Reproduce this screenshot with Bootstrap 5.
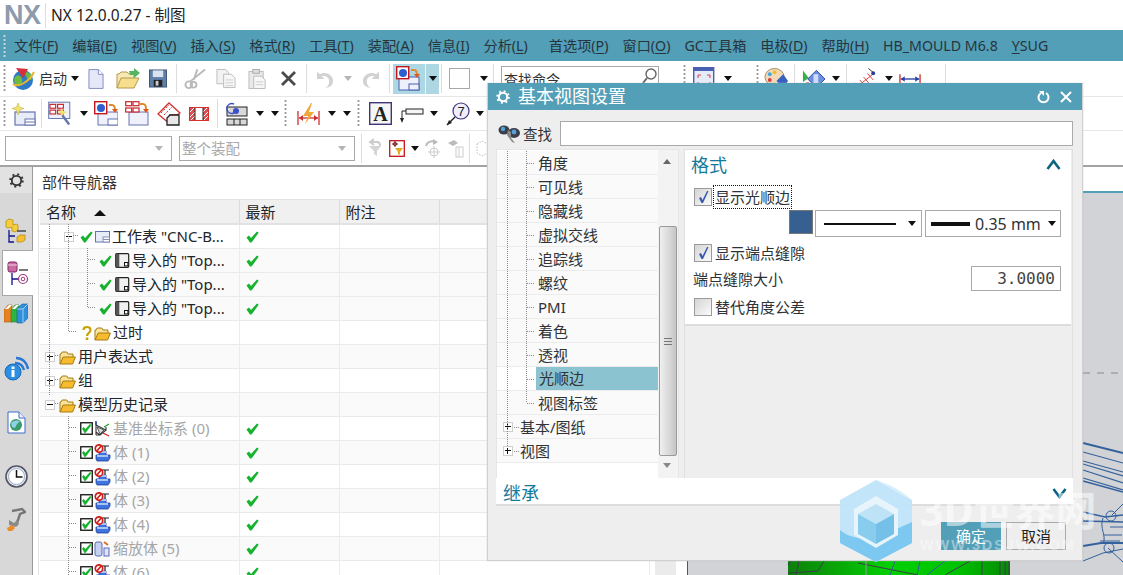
<!DOCTYPE html>
<html lang="zh">
<head>
<meta charset="utf-8">
<title>NX 12.0.0.27 - 制图</title>
<link href="https://cdn.jsdelivr.net/npm/bootstrap@5.3.0/dist/css/bootstrap.min.css" rel="stylesheet">
<style>
html,body{margin:0;height:575px;overflow:hidden;background:#fff}
body{font-family:"Noto Sans","Noto Sans CJK SC",sans-serif;font-size:15px;line-height:20px;color:#2f3336}
.app{width:1123px;height:575px;position:relative;overflow:hidden}
svg{display:block;flex:none}
.titlebar{height:30px;background:#fff}
.nxlogo{font:bold 27px/30px "Liberation Sans",sans-serif;color:#8d9cac;width:46px;padding-left:4px;height:25px;border-right:1px solid #ddd;display:flex;align-items:center;letter-spacing:-.5px}
.apptitle{font-size:15.5px;margin-left:5px;color:#222}
.menubar{height:31px;background:#549fb8;color:#26343c;padding-left:14px;gap:14px;position:relative;font-size:14.2px}
.menubar span{white-space:nowrap}
.menubar u{text-underline-offset:2px}
.menu-gap{margin-left:7px}
.grip{width:3px;background-image:radial-gradient(circle,#999 1px,transparent 1.2px);background-size:3px 4px;flex:none}
.menugrip{position:absolute;left:3px;top:4px;height:24px;background-image:radial-gradient(circle,#d0d8dc 1px,transparent 1.2px)}
.tbar{background:#fff;border-bottom:1px solid #e6e6e6;padding-left:3px}
.tb1{height:36px}.tb2{height:34px}.tb3{height:36px;border-bottom:2px solid #a3a3a3;padding-left:5px}
.tgrip{height:29px}
.vsep{width:1px;height:29px;background:#ddd;flex:none}
.tri{width:0;height:0;border-left:4px solid transparent;border-right:4px solid transparent;border-top:5px solid #111;flex:none}
.tri-off{border-top-color:#b5b5b5}
.hl{width:46px;height:30px;background:#acd7e3;display:flex;align-items:center;padding-left:3px;flex:none}
.hl i{width:1px;height:30px;background:#e8f4f7;margin-left:5px;margin-right:3px}
.stxt{font-size:14px}
.whitebox{width:21px;height:21px;border:1px solid #a8a8a8;background:#fff;flex:none}
.findcmd{width:158px;height:26px;border:1px solid #a8a8a8;padding-left:2px;font-size:14px;line-height:26px;display:flex;justify-content:space-between;flex:none}
.combo{height:25px;border:1px solid #a8a8a8;background:#fff;display:flex;align-items:center;justify-content:space-between;padding:0 8px 0 2px;color:#aaa;font-size:14.5px;flex:none}
.c1{width:167px}.c2{width:176px}
.ml1{margin-left:1px}.ml2{margin-left:2px}.ml3{margin-left:3px}.ml4{margin-left:4px}.ml5{margin-left:5px}.ml6{margin-left:6px}.ml7{margin-left:7px}.ml8{margin-left:8px}.ml9{margin-left:9px}.ml10{margin-left:10px}.ml11{margin-left:11px}.ml12{margin-left:12px}.ml13{margin-left:13px}.ml24{margin-left:24px}
.bodyrow{height:408px}
.rail{width:33px;background:#d8d8d8;border-right:1px solid #9a9a9a;flex:none;align-items:center}
.railtop{height:26px;width:100%;background:#e2e2e2;display:flex;align-items:center;justify-content:center}
.railtab{width:31px;height:46px;margin-left:2px;background:#fff;border:1px solid #a8a8a8;border-right:0;display:flex;align-items:center;padding-left:4px}
.r1{margin-top:25px}.r2{margin-top:6px}.r3{margin-top:7px}.r4{margin-top:31px}.r5{margin-top:30px}.r6{margin-top:31px}.r7{margin-top:19px}
.navpanel{width:622px;background:#fff;flex:none;position:relative}
.navtitle{height:32px;padding:1px 0 0 9px;line-height:28px;font-size:15px}
.navwrap{margin-left:5px;border:1px solid #e2e2e2;border-bottom:0;position:relative;height:376px;overflow:hidden;border-right:0;padding-left:1px}
.navtbl{width:610px;table-layout:fixed;margin:0;border-collapse:collapse}
.navtbl th{height:24px;background:#f0f0f0;font-weight:400;border-right:1px solid #dcdcdc;border-bottom:2px solid #e2e2e2;padding:0 0 0 6px;line-height:22px;font-size:15px}
.navtbl td{height:24px;padding:0;border-right:1px solid #ececec;border-bottom:1px solid #eaeaea;line-height:23px;background:#fff;white-space:nowrap;box-shadow:none;vertical-align:middle}
.navtbl tr.zeb td{background:#fafafa}
.navtbl td.ckc{padding-left:6px}
.navtbl .off{color:#a6a6a6}
.colname{width:199px}.colnew{width:100px}.colnote{width:100px}
.sortup{border-left:6px solid transparent;border-right:6px solid transparent;border-bottom:6px solid #111;width:0;height:0;display:inline-block;margin-left:18px;vertical-align:2px}
.cell{display:flex;align-items:center;height:23px}
.lv0{padding-left:5px}.lv1{padding-left:24px}.lv3{padding-left:59px}.lv1b{padding-left:40px}
.pbox{width:10px;height:10px;border:1px solid #cfcfcf;background:#fff;position:relative;flex:none;display:block}
.pbox::before{content:"";position:absolute;left:1px;right:1px;top:3px;height:1px;background:#111}
.pbox.plus::after{content:"";position:absolute;top:1px;bottom:1px;left:3px;width:1px;background:#111}
.treelines{position:absolute;left:0;top:0;pointer-events:none}
.splitter{width:21px;background:#ebebeb;flex:none}
.gfxcol{flex:1;min-width:0}
.tabstrip{height:26px;background:#fff;border-bottom:2px solid #549fb8;flex:none}
.gfxbody{flex:1;background:#fff;padding-left:11px;min-height:0}
.gfx{background:#d2d3d6;border-left:1px solid #555;height:100%;position:relative;overflow:hidden}
/* dialog */
.dlg{position:absolute;left:487px;top:83px;width:596px;height:478px;background:#eee;border:1px solid #d0d0d0;border-top:0;box-shadow:0 0 1px #bbb}
.dlghead{height:27px;background:#549fb8;color:#fff;font-size:18px;line-height:27px;padding:0 10px 0 8px;flex:none}
.dlgfind{height:39px;padding:8px 9px 0 10px;flex:none;font-size:14.5px}
.findin{flex:1;height:25px;border:1px solid #aaa;background:#fff;margin-left:8px}
.dlgmid{height:329px;padding:0 9px 0 8px;flex:none;gap:5px}
.treep{width:183px;background:#fff;border:1px solid #e6e6e6;border-bottom:0;position:relative;flex:none;padding-top:1px}
.trow{height:24px;width:162px;background:#fafafa;border-bottom:1px solid #ececec;display:flex;align-items:center;line-height:20px;font-size:15px}
.trow.plain{padding-left:41px}
.trow.sel{background:#fff;padding-left:39px}
.trow.sel b{font-weight:400;background:#8cc3d1;display:block;height:23px;line-height:23px;width:123px;padding-left:3px}
.trow.top{padding-left:6px}
.trow.top .tl{margin-left:7px}
.sbar{position:absolute;right:0;top:0;bottom:0;width:20px;background:#f3f3f3}
.thumb{position:absolute;left:1px;width:18px;top:76px;height:230px;border:1px solid #9a9a9a;border-radius:2px;background:linear-gradient(90deg,#f0f0f0,#c6c6c6)}
.arrup,.arrdn{position:absolute;left:5px;width:0;height:0;border-left:4px solid transparent;border-right:4px solid transparent}
.arrup{top:9px;border-bottom:5px solid #666}
.arrdn{bottom:10px;border-top:5px solid #888}
.gripl{position:absolute;left:4px;right:4px;top:111px;height:7px;border-top:1px solid #777;border-bottom:1px solid #777}
.gripl::after{content:"";position:absolute;left:0;right:0;top:2px;height:1px;background:#777}
.setp{flex:1;border:1px solid #e0e0e0;border-bottom:0;background:#eee}
.setwhite{height:176px;background:#fff;border-bottom:2px solid #ddd;padding:2px 10px 0 6px;margin-right:1px}
.sechead{color:#157a9a;font-size:18px;line-height:24px;height:25px}
.chev{flex:none}
.ckrow{height:24px;font-size:15px;line-height:20px;display:flex;align-items:center}
.ckrow.c-a{margin-top:8px}
.ckrow.c-b{margin-top:4px}
.ckrow.c-c{margin-top:4px}
.ckbox{width:18px;height:18px;border:1px solid #9b9b9b;background:linear-gradient(135deg,#d4d4d4,#fbfbfb);flex:none;margin-left:3px;margin-right:3px;display:flex;align-items:center;justify-content:center}
.plainlbl{padding-left:0}
.focusbox{outline:1px dotted #111;outline-offset:1px;padding:0;line-height:20px}
.lineopts{margin-top:1px;height:27px}
.swatch{width:24px;height:24px;background:#35608f;border:1px solid #777;flex:none}
.lsel{height:27px;border:1px solid #aaa;background:#fff;display:flex;align-items:center;flex:none;white-space:nowrap}
.ls1{width:107px;margin-left:2px;margin-right:3px;padding-left:8px}
.ls2{width:136px;padding-left:5px;font-size:16px}
.lin1{height:2px;width:72px;background:#111}
.lin2{height:4px;width:39px;background:#111;margin-right:5px}
.numrow{margin-top:1px}
.numin{width:90px;height:25px;border:1px solid #aaa;background:#fff;text-align:right;padding-right:5px;font:16px/24px "DejaVu Sans Mono",monospace;color:#444}
.secbar{height:28px;background:#fff;border-bottom:2px solid #ddd;margin:0 9px 0 8px;padding:4px 6px 0 7px;flex:none;color:#157a9a;font-size:18px;line-height:24px}
.dlgbtns{padding:16px 16px 0 0;gap:5px}
.dbtn{height:28px;width:60px;font-size:15px;line-height:26px;padding:0;border-radius:0;text-align:center}
.dbtn-ok{background:#549fb8;color:#fff;border:1px solid #549fb8}
.dbtn-no{background:#eee;color:#222;border:1px solid #aaa}
.rowlabel{padding-left:2px;flex:1}
/* watermark */
.wmark{position:absolute;left:838px;top:478px;width:264px;height:86px;pointer-events:none}
.wmcn{position:absolute;left:82px;top:9px;color:rgba(255,255,255,.55);font:700 41px/46px "Noto Sans","Noto Sans CJK SC",sans-serif;white-space:nowrap}
.wmen{position:absolute;left:82px;top:57px;color:rgba(255,255,255,.42);font:700 14.5px/20px "Liberation Sans",sans-serif;letter-spacing:1.9px;white-space:nowrap}
</style>
</head>
<body>
<svg width="0" height="0" class="position-absolute">
<defs>
<symbol id="ck" viewBox="0 0 13 12"><path d="M.5 6.500 3 4.600l2 2.400L11 .5l1.700 1.200-7.200 9.800H4z" fill="#17b32f"/></symbol>
<symbol id="cb" viewBox="0 0 13 13"><rect x=".75" y=".75" width="11.500" height="11.500" fill="#fff" stroke="#111" stroke-width="1.300"/><path d="M2 6.500 3.800 5l1.600 2L10 2l1.500 1-6 8H4.500z" fill="#17b32f"/></symbol>
<symbol id="fo" viewBox="0 0 17 16"><path d="M1 15V5h1l1.200-2h4.600L9 5h5v4" fill="#f8e39a" stroke="#a67a12"/><path d="M1 15 4.200 8H16.400L13.600 15z" fill="#f6bb2f" stroke="#a67a12"/></symbol>
<symbol id="sh" viewBox="0 0 15 12"><rect x=".5" y=".5" width="14" height="10.500" fill="#e9edf9" stroke="#6474ad"/><rect x="8" y="6" width="6.500" height="5" fill="#fff" stroke="#8590b8"/><path d="M8 8.500h6.500" stroke="#8590b8"/></symbol>
<symbol id="im" viewBox="0 0 15 15"><rect x=".7" y=".7" width="13" height="13.600" rx="1" fill="#f1f1f1" stroke="#222" stroke-width="1.200"/><rect x=".7" y=".7" width="3.600" height="13.600" fill="#555"/><rect x="9.500" y="9.500" width="3.400" height="3.400" fill="#fff" stroke="#111"/></symbol>
<symbol id="bd" viewBox="0 0 17 18"><path d="M8 2h7M11 2v5" fill="none" stroke="#222" stroke-width="1.200"/><path d="M5 7h7v4h4v3l-2 3H3l-1-2v-4h3z" fill="#3f73e0" stroke="#1f3f96" stroke-width=".8"/><path d="M5 7h7v2H5zM3 11h11v2H3z" fill="#a8c4f4"/><circle cx="5" cy="4.500" r="3.700" fill="#fff" stroke="#d21b1b" stroke-width="1.700"/><path d="M2.500 7.500l5-6" stroke="#d21b1b" stroke-width="1.700"/></symbol>
<symbol id="sc" viewBox="0 0 16 16"><path d="M2 1v13M2 4l10 5-6 5-4-3M2 14l4 0M12 9v-3" stroke="#333" fill="none" stroke-width="1.100"/><path d="M2 0v4" stroke="#1c49b8" stroke-width="1.400"/><path d="M10 6l5-3" stroke="#2aa02a" stroke-width="1.300"/><path d="M9 12l6 3" stroke="#d22" stroke-width="1.300"/><path d="M3 6l7 3-4 4z" fill="#d8d8d8" stroke="#333" stroke-width=".8"/></symbol>
<symbol id="gsheet" viewBox="0 0 24 24"><rect x="3" y="10" width="20" height="13" fill="#e8ebf8" stroke="#6474ad" stroke-width="1.200"/><rect x="13" y="17" width="10" height="6" fill="#fff" stroke="#6474ad"/><path d="M13 20h10" stroke="#6474ad"/></symbol>
</defs>
</svg>

<div class="app d-flex flex-column">
  <header class="titlebar d-flex align-items-center">
    <div class="nxlogo">NX</div>
    <div class="apptitle">NX 12.0.0.27 - 制图</div>
  </header>

  <nav class="menubar d-flex align-items-center">
    <div class="grip menugrip"></div>
    <span>文件(<u>F</u>)</span><span>编辑(<u>E</u>)</span><span>视图(<u>V</u>)</span><span>插入(<u>S</u>)</span><span>格式(<u>R</u>)</span><span>工具(<u>T</u>)</span><span>装配(<u>A</u>)</span><span>信息(<u>I</u>)</span><span>分析(<u>L</u>)</span><span class="menu-gap">首选项(<u>P</u>)</span><span>窗口(<u>O</u>)</span><span>GC工具箱</span><span>电极(<u>D</u>)</span><span>帮助(<u>H</u>)</span><span>HB_MOULD M6.8</span><span><u>Y</u>SUG</span>
  </nav>

  <div class="tbar tb1 d-flex align-items-center">
    <div class="grip tgrip"></div>
    <svg class="ml6" width="23" height="24" viewBox="0 0 23 24"><circle cx="11" cy="13" r="10" fill="#2f79c9"/><path d="M3 10c3-3 6-1 7 2s-1 8-4 7-5-6-3-9zM14 5c3 0 6 3 6 6s-3 2-4 1-4-5-2-7z" fill="#6dbb3d"/><path d="M1 17C6 21 17 15 22 5" stroke="#e7b52c" stroke-width="2" fill="none"/><path d="M4 1 16 2 11 11z" fill="#d8303a"/></svg>
    <span class="stxt ml4">启动</span><span class="tri ml4"></span>
    <svg class="ml9" width="16" height="22" viewBox="0 0 17 22"><path d="M1 1h10l5 5v15H1z" fill="#e6e8fa" stroke="#7f86c0"/><path d="M11 1v5h5" fill="#fff" stroke="#7f86c0"/></svg>
    <svg class="ml12" width="24" height="22" viewBox="0 0 24 22"><path d="M1 20V6h2l2-2h6l2 2h5v4" fill="#f6e8b0" stroke="#b49a4c"/><path d="M1 20l4-10h18l-5 10z" fill="#f6de8c" stroke="#b49a4c"/><path d="M13 3h5V0l6 5-6 5V7h-4z" fill="#56b560"/></svg>
    <svg class="ml9" width="18" height="19" viewBox="0 0 19 19"><rect x=".5" y=".5" width="18" height="18" fill="#5f7fa8" stroke="#3c5474"/><rect x="4" y="1" width="11" height="7" fill="#d9e2ee"/><rect x="5" y="11" width="9" height="7" fill="#222"/><rect x="7" y="12" width="3" height="5" fill="#ccc"/></svg>
    <span class="vsep ml9"></span>
    <svg class="ml7" width="22" height="22" viewBox="0 0 23 22"><g stroke="#b9b9b9" fill="none" stroke-width="2"><path d="M22 1 6 14M14 1 10 12"/><circle cx="5" cy="17" r="3.500"/><circle cx="10" cy="17" r="3"/></g></svg>
    <svg class="ml10" width="20" height="21" viewBox="0 0 21 21"><path d="M1 1h9l3 3v12H1z" fill="#f2f2f2" stroke="#bbb"/><path d="M8 6h8l4 4v10H8z" fill="#f7f7f7" stroke="#bbb"/><path d="M10 12h8M10 15h8M10 18h8" stroke="#ccc"/></svg>
    <svg class="ml12" width="19" height="22" viewBox="0 0 20 22"><rect x="1" y="3" width="15" height="18" fill="#e9e9e9" stroke="#bbb"/><rect x="5" y="1" width="7" height="4" fill="#ddd" stroke="#aaa"/><path d="M6 8h8l4 4v9H6z" fill="#f7f7f7" stroke="#bbb"/><path d="M8 14h8M8 17h8" stroke="#ccc"/></svg>
    <svg class="ml13" width="17" height="17" viewBox="0 0 17 17"><path d="M2 2l13 13M15 2 2 15" stroke="#4a4a4a" stroke-width="2.800"/></svg>
    <span class="vsep ml9"></span>
    <svg class="ml9" width="18" height="20" viewBox="0 0 19 20"><path d="M1 2v8h8L6 7c3-1 8 1 8 5s-2 6-4 7c5 0 8-3 8-7C18 6 11 1 4 5z" fill="#d2d2d2"/></svg>
    <span class="tri tri-off ml10"></span>
    <svg class="ml10" width="18" height="20" viewBox="0 0 19 20"><path d="M18 2v8h-8l3-3C10 6 5 8 5 12s2 6 4 7c-5 0-8-3-8-7C1 6 8 1 15 5z" fill="#d2d2d2"/></svg>
    <span class="vsep ml9"></span>
    <div class="hl ml3">
      <svg width="24" height="25" viewBox="0 0 24 25"><rect x="3" y="11" width="20" height="13" fill="#eef1fb" stroke="#4860b0"/><rect x="13" y="18" width="10" height="6" fill="#eef1fb" stroke="#4860b0"/><path d="M15 4h3c2 0 3 2 3 5" stroke="#e08a2c" stroke-width="2" fill="none"/><path d="M18 8h6l-3 4z" fill="#e0561c"/><rect x=".7" y=".7" width="12" height="12" fill="#fff" stroke="#c4161c" stroke-width="1.400"/><circle cx="7" cy="7" r="4" fill="#2e5fd0"/></svg>
      <i></i><span class="tri"></span>
    </div>
    <span class="vsep ml2"></span>
    <span class="whitebox ml7"></span><span class="tri ml10"></span>
    <span class="vsep ml5"></span>
    <div class="findcmd ml7"><span>查找命令</span><svg class="ml4" width="18" height="18" viewBox="0 0 18 18"><circle cx="11" cy="7" r="5" fill="#fff" stroke="#666" stroke-width="1.400"/><path d="M7 11l-4 5" stroke="#666" stroke-width="2"/></svg></div>
    <div class="grip tgrip ml24"></div>
    <svg class="ml7" width="22" height="24" viewBox="0 0 22 24"><rect x=".7" y=".7" width="20" height="22" fill="#e6ebf8" stroke="#4a60b2" stroke-width="1.400"/><rect x="1" y="1" width="20" height="3" fill="#4a60b2"/><path d="M5 8h3M5 8v3M17 8h-3M17 8v3M5 18h3M5 18v-3M17 18h-3M17 18v-3" stroke="#d04040" fill="none"/></svg>
    <span class="tri ml9"></span>
    <div class="grip tgrip ml24"></div>
    <svg class="ml5" width="24" height="24" viewBox="0 0 25 24"><ellipse cx="11" cy="10" rx="10" ry="9" fill="#f3d9b8" stroke="#a98a5c"/><circle cx="6" cy="7" r="2" fill="#3aa8e0"/><circle cx="11" cy="5" r="2" fill="#f0c020"/><circle cx="6" cy="13" r="2" fill="#d84040"/><rect x="8" y="17" width="6" height="7" fill="#f0d040"/><path d="M13 14 20 7l5 7-5 7z" fill="#3760c0"/></svg>
    <span class="vsep ml6"></span>
    <svg class="ml7" width="23" height="24" viewBox="0 0 24 24"><path d="M1 3l6 8-6 4z" fill="#38b048"/><path d="M1 17l6-2v7z" fill="#d83030"/><path d="M6 12 15 3l9 9-9 9z" fill="#6d8fe0" stroke="#2a4aa8"/><path d="M12 7h5v10h-5z" fill="#cfdcf8"/></svg>
    <span class="tri ml7"></span>
    <span class="vsep ml6"></span>
    <svg class="ml8" width="22" height="24" viewBox="0 0 23 24"><g stroke="#d83a3a" fill="none"><path d="M1 21 20 6M1 16l6 7M5 13l7 8M9 10l7 8M13 6l6 7"/></g><circle cx="19" cy="6" r="2" fill="#2a3eaa"/><path d="M14 1l6 5" stroke="#333"/></svg>
    <span class="tri ml8"></span>
    <svg class="ml6" width="22" height="10" viewBox="0 0 23 10"><path d="M1 0v10M22 0v10" stroke="#d03030" stroke-width="1.400"/><path d="M2 5h19" stroke="#2a3eaa" stroke-width="1.400"/><path d="M2 5l4-3v6zM21 5l-4-3v6z" fill="#2a3eaa"/></svg>
    <span class="vsep ml24"></span>
  </div>

  <div class="tbar tb2 d-flex align-items-center">
    <div class="grip tgrip"></div>
    <svg class="ml6" width="24" height="24" viewBox="0 0 24 24"><use href="#gsheet"/><path d="M6 1l1.500 4L12 6.500l-4 1.500L6 13 4.500 8 0 6.500l4.500-1.500z" fill="#f3e26a" stroke="#b8a840" stroke-width=".5"/></svg>
    <span class="vsep ml5"></span>
    <svg class="ml6" width="24" height="25" viewBox="0 0 25 25"><rect x=".7" y=".7" width="22" height="17" fill="#eef1fb" stroke="#6474ad"/><g fill="#fff" stroke="#c8242b" stroke-width="1.200"><rect x="2" y="3" width="6" height="4"/><rect x="10" y="3" width="6" height="4"/><rect x="2" y="9" width="6" height="4"/><rect x="10" y="9" width="6" height="4"/></g><path d="M14 13l8 11" stroke="#6474ad" stroke-width="2.400"/><path d="M14 7l2 3 4 1-4 2-2 3-1-4-3-1 3-1z" fill="#f3e26a"/></svg>
    <span class="tri ml8"></span>
    <svg class="ml6" width="24" height="25" viewBox="0 0 24 25"><rect x="4" y="11" width="20" height="13" fill="#eef1fb" stroke="#6474ad"/><rect x="14" y="18" width="10" height="6" fill="#fff" stroke="#6474ad"/><path d="M15 4h3c2 0 3 2 3 5" stroke="#e08a2c" stroke-width="2" fill="none"/><path d="M18 8h6l-3 4z" fill="#e0561c"/><rect x=".7" y=".7" width="12" height="12" fill="#fff" stroke="#c4161c" stroke-width="1.400"/><circle cx="7" cy="7" r="4" fill="#2e5fd0"/></svg>
    <svg class="ml7" width="24" height="25" viewBox="0 0 24 25"><rect x="4" y="11" width="19" height="13" fill="#eef1fb" stroke="#6474ad"/><g fill="#fff" stroke="#c8242b" stroke-width="1.200"><rect x=".7" y=".7" width="6" height="4"/><rect x="8" y=".7" width="6" height="4"/><rect x=".7" y="7" width="6" height="4"/><rect x="8" y="7" width="6" height="4"/></g><path d="M15 3h3c2 0 3 2 3 5" stroke="#e08a2c" stroke-width="2" fill="none"/><path d="M18 8h6l-3 4z" fill="#e0561c"/></svg>
    <svg class="ml8" width="24" height="24" viewBox="0 0 24 24"><path d="M1 12 12 1l11 10-3 2H13v9z" fill="#fff" stroke="#d43030" stroke-width="1.300"/><path d="M4 11l8-8M7 13l8-8" stroke="#d43030" stroke-width="1" stroke-dasharray="2 1.500"/><path d="M10 23V16l3-3h9v10z" fill="#e8e8e8" stroke="#222" stroke-width="1.300"/></svg>
    <svg class="ml8" width="20" height="14" viewBox="0 0 20 14"><rect x=".5" y=".5" width="19" height="13" fill="#fff" stroke="#d43030"/><path d="M1 1h5v12H1zM14 1h5v12h-5z" fill="#d85050"/><path d="M1 5l4-4M1 10l5-5M2 13l4-4M14 5l4-4M14 10l5-5M15 13l4-4" stroke="#fff"/><path d="M6 1v12M14 1v12" stroke="#222"/></svg>
    <span class="vsep ml8"></span>
    <svg class="ml7" width="23" height="24" viewBox="0 0 23 24"><rect x="2" y="5" width="20" height="9" fill="#d8d8d8" stroke="#222"/><rect x="2" y="17" width="20" height="6" fill="#d8d8d8" stroke="#222"/><path d="M9 17v6M15 17v6" stroke="#222"/><path d="M9 2a5 5 0 1 0 0 9" fill="none" stroke="#3a4fc8" stroke-width="1.400"/><circle cx="11" cy="9" r="3" fill="#3a4fc8"/></svg>
    <span class="tri ml8"></span><span class="tri ml7"></span>
    <div class="grip tgrip ml5"></div>
    <svg class="ml10" width="23" height="22" viewBox="0 0 23 22"><path d="M1 8v14M22 8v14" stroke="#d03030" stroke-width="1.300"/><path d="M2 15h19" stroke="#d03030" stroke-width="1.300"/><path d="M2 15l4-3v6zM21 15l-4-3v6z" fill="#d03030"/><path d="M14 0 6 13h5l-3 8 9-12h-5l3-9z" fill="#efa83a"/></svg>
    <span class="tri ml8"></span><span class="tri ml7"></span>
    <div class="grip tgrip ml6"></div>
    <svg class="ml9" width="23" height="23" viewBox="0 0 23 23"><rect x=".7" y=".7" width="21.600" height="21.600" fill="#f5f5f5" stroke="#3d3678" stroke-width="1.400"/><text x="11.500" y="18.500" text-anchor="middle" font-family="Liberation Serif,serif" font-weight="700" font-size="20" fill="#222">A</text></svg>
    <svg class="ml8" width="24" height="22" viewBox="0 0 24 22"><rect x="6" y="6" width="17" height="5" fill="#f5f5f5" stroke="#222"/><path d="M6 8H2v8" stroke="#222" fill="none"/><path d="M0 15h4l-2 5z" fill="#222"/></svg>
    <span class="tri ml6"></span>
    <svg class="ml8" width="24" height="24" viewBox="0 0 24 24"><circle cx="15" cy="9" r="8" fill="#eef" stroke="#3d3678" stroke-width="1.200"/><text x="15" y="14" text-anchor="middle" font-family="Liberation Sans,sans-serif" font-size="13" fill="#222">7</text><path d="M9 15 1 23" stroke="#222" stroke-width="1.400"/><path d="M1 23l2-5 3 3z" fill="#222"/></svg>
    <span class="tri ml6"></span>
  </div>

  <div class="tbar tb3 d-flex align-items-center">
    <div class="combo c1"><span></span><span class="tri tri-off"></span></div>
    <div class="combo c2 ml7"><span>整个装配</span><span class="tri tri-off"></span></div>
    <span class="vsep ml6"></span>
    <svg class="ml6" width="18" height="20" viewBox="0 0 18 20"><path d="M1 8h12l-4 5v5l-3-2v-3z" fill="#d5d5d5"/><path d="M6 1l-4 3 4 3M3 4h6c3 0 3 3 3 4" stroke="#ccc" fill="none" stroke-width="2"/></svg>
    <svg class="ml3" width="16" height="17" viewBox="0 0 16 17"><rect x=".7" y=".7" width="14.600" height="15.600" fill="#fff" stroke="#c4161c" stroke-width="1.300"/><path d="M3 4h6M6 1v6" stroke="#722"/><circle cx="6" cy="4" r="1.600" fill="none" stroke="#722"/><path d="M6 8h8l-3 4v3l-2-1v-2z" fill="#e8a820"/></svg>
    <span class="tri ml6"></span>
    <svg class="ml6" width="16" height="20" viewBox="0 0 16 20"><path d="M1 8a6 6 0 0 1 10-3" stroke="#bbb" fill="none" stroke-width="2"/><path d="M8 1l5 3-5 3z" fill="#bbb"/><circle cx="9" cy="14" r="4" fill="none" stroke="#ccc"/><path d="M3 14h12M9 8v12" stroke="#ccc"/></svg>
    <svg class="ml6" width="17" height="20" viewBox="0 0 17 20"><path d="M1 5 7 2l4 3-5 3z" fill="#bbb"/><rect x="9" y="9" width="7" height="10" fill="none" stroke="#ccc"/><path d="M12 9v10" stroke="#ccc"/></svg>
    <span class="vsep ml5"></span>
    <svg class="ml6" width="12" height="18" viewBox="0 0 12 18"><path d="M1 5l5-3 6 3v9l-6 3-5-3z" fill="none" stroke="#bbb" stroke-dasharray="1.500 1.500"/></svg>
  </div>

  <div class="bodyrow d-flex">
    <aside class="rail d-flex flex-column">
      <div class="railtop"><svg width="15" height="15" viewBox="0 0 15 15"><circle cx="7.500" cy="7.500" r="4.700" fill="none" stroke="#333" stroke-width="1.800"/><circle cx="7.500" cy="7.500" r="6.300" fill="none" stroke="#333" stroke-width="1.800" stroke-dasharray="2 2.950"/></svg></div>
      <svg class="r1" width="22" height="26" viewBox="0 0 22 26"><path d="M1 3l3-2 4 1v5l3-1 2 1v5l-3 2-3-1V9L3 10 1 9z" fill="#f5cf3a" stroke="#b08418" stroke-width=".7"/><path d="M4 12v12h5M4 18h6" stroke="#12128c" stroke-width="1.300" fill="none"/><path d="M12 13h9" stroke="#222" stroke-width="1.200"/><path d="M12 19l3-2h5v5l-3 2h-5z" fill="#f5c030" stroke="#b08418" stroke-width=".7"/></svg>
      <div class="railtab r2"><svg width="22" height="24" viewBox="0 0 22 24"><rect x="1" y="1" width="9" height="10" rx="2" fill="#c96aa0" stroke="#7a2a5c"/><path d="M1 4h9" stroke="#f3d4e6"/><path d="M12 9h9" stroke="#222" stroke-width="1.200"/><path d="M5 12v12M5 18h6" stroke="#12128c" stroke-width="1.300"/><circle cx="16" cy="18" r="4.500" fill="#fff" stroke="#9a3b78" stroke-width="1.200"/><circle cx="16" cy="18" r="1.800" fill="none" stroke="#9a3b78"/></svg></div>
      <svg class="r3" width="24" height="22" viewBox="0 0 24 22"><path d="M0 7l4-5h4v17H0z" fill="#e8821f" stroke="#a85a10" stroke-width=".6"/><path d="M1 6 5 2h3L4 6z" fill="#fff"/><path d="M7 7l4-5h4v17H7z" fill="#2fb344" stroke="#1f7d2e" stroke-width=".6"/><path d="M8 6l4-4h3l-4 4z" fill="#fff"/><path d="M13 6l5-5h6v14l-5 5h-6z" fill="#2f8fdd" stroke="#1a5fa0" stroke-width=".6"/><path d="M13 6h6V20M19 6l5-5" stroke="#bcdcf5" fill="none" stroke-width=".8"/></svg>
      <svg class="r4" width="26" height="25" viewBox="0 0 26 25"><circle cx="10" cy="16" r="8" fill="#2b8fe3" stroke="#1666b5"/><rect x="8.500" y="14" width="3" height="7" fill="#fff"/><rect x="8.500" y="10.500" width="3" height="2.500" fill="#fff"/><path d="M12 7c5 0 8 3 9 7M13 2c6 0 11 4 12 11" stroke="#2b77d3" stroke-width="2.500" fill="none"/></svg>
      <svg class="r5" width="19" height="23" viewBox="0 0 19 23"><path d="M1 1h11l6 6v15H1z" fill="#fff" stroke="#3a6cc8"/><path d="M12 1v6h6" fill="#eef" stroke="#3a6cc8"/><circle cx="9" cy="14" r="6" fill="#3b9c6a"/><path d="M4 12c3-3 6-3 9-2l-3 3-2 4-3-1z" fill="#8fd0ea"/></svg>
      <svg class="r6" width="23" height="23" viewBox="0 0 23 23"><circle cx="11.500" cy="11.500" r="10.500" fill="#e4ecf7" stroke="#556" stroke-width="1.600"/><circle cx="11.500" cy="11.500" r="8" fill="#fff" stroke="#9ab"/><path d="M11.500 5v7h6" stroke="#111" stroke-width="1.500" fill="none"/></svg>
      <svg class="r7" width="20" height="24" viewBox="0 0 20 24"><path d="M6 4 16 2l3 3-5 2-4 12" fill="none" stroke="#777" stroke-width="2.400"/><path d="M3 13l5 3 3-3 2 4-4 3-6-2z" fill="#8a8a8a"/><path d="M1 21l5-3 3 3-3 3H2z" fill="#ef8a2a"/></svg>
    </aside>

    <section class="navpanel d-flex flex-column">
      <div class="navtitle">部件导航器</div>
      <div class="navwrap">
        <table class="navtbl table">
          <thead><tr><th class="colname">名称<span class="sortup"></span></th><th class="colnew">最新</th><th class="colnote">附注</th><th></th></tr></thead>
          <tbody>
            <tr><td><div class="cell lv1"><span class="pbox"></span><svg class="ml6" width="13" height="12"><use href="#ck"/></svg><svg class="ml2" width="15" height="12"><use href="#sh"/></svg><span class="ml2">工作表 "CNC-B...</span></div></td><td class="ckc"><svg width="13" height="12"><use href="#ck"/></svg></td><td></td><td></td></tr>
            <tr class="zeb"><td><div class="cell lv3"><svg width="13" height="12"><use href="#ck"/></svg><svg class="ml3" width="15" height="15"><use href="#im"/></svg><span class="ml2">导入的 "Top...</span></div></td><td class="ckc"><svg width="13" height="12"><use href="#ck"/></svg></td><td></td><td></td></tr>
            <tr class="zeb"><td><div class="cell lv3"><svg width="13" height="12"><use href="#ck"/></svg><svg class="ml3" width="15" height="15"><use href="#im"/></svg><span class="ml2">导入的 "Top...</span></div></td><td class="ckc"><svg width="13" height="12"><use href="#ck"/></svg></td><td></td><td></td></tr>
            <tr class="zeb"><td><div class="cell lv3"><svg width="13" height="12"><use href="#ck"/></svg><svg class="ml3" width="15" height="15"><use href="#im"/></svg><span class="ml2">导入的 "Top...</span></div></td><td class="ckc"><svg width="13" height="12"><use href="#ck"/></svg></td><td></td><td></td></tr>
            <tr><td><div class="cell lv1b"><svg class="ml2" width="10" height="16" viewBox="0 0 10 16"><path d="M1.500 5C1.500 1 8.500 1 8.500 5c0 3-3.500 3-3.500 6" fill="none" stroke="#c8a200" stroke-width="2.200"/><rect x="3.800" y="12.500" width="2.500" height="2.500" fill="#c8a200"/></svg><svg class="ml2" width="17" height="16"><use href="#fo"/></svg><span class="ml2">过时</span></div></td><td></td><td></td><td></td></tr>
            <tr class="zeb"><td><div class="cell lv0"><span class="pbox plus"></span><svg class="ml4" width="17" height="16"><use href="#fo"/></svg><span class="ml2">用户表达式</span></div></td><td></td><td></td><td></td></tr>
            <tr><td><div class="cell lv0"><span class="pbox plus"></span><svg class="ml4" width="17" height="16"><use href="#fo"/></svg><span class="ml2">组</span></div></td><td></td><td></td><td></td></tr>
            <tr class="zeb"><td><div class="cell lv0"><span class="pbox"></span><svg class="ml4" width="17" height="16"><use href="#fo"/></svg><span class="ml2">模型历史记录</span></div></td><td></td><td></td><td></td></tr>
            <tr><td><div class="cell lv1b"><svg width="13" height="13"><use href="#cb"/></svg><svg class="ml1" width="16" height="16"><use href="#sc"/></svg><span class="ml3 off">基准坐标系 (0)</span></div></td><td class="ckc"><svg width="13" height="12"><use href="#ck"/></svg></td><td></td><td></td></tr>
            <tr class="zeb"><td><div class="cell lv1b"><svg width="13" height="13"><use href="#cb"/></svg><svg class="ml1" width="17" height="18"><use href="#bd"/></svg><span class="ml2 off">体 (1)</span></div></td><td class="ckc"><svg width="13" height="12"><use href="#ck"/></svg></td><td></td><td></td></tr>
            <tr><td><div class="cell lv1b"><svg width="13" height="13"><use href="#cb"/></svg><svg class="ml1" width="17" height="18"><use href="#bd"/></svg><span class="ml2 off">体 (2)</span></div></td><td class="ckc"><svg width="13" height="12"><use href="#ck"/></svg></td><td></td><td></td></tr>
            <tr class="zeb"><td><div class="cell lv1b"><svg width="13" height="13"><use href="#cb"/></svg><svg class="ml1" width="17" height="18"><use href="#bd"/></svg><span class="ml2 off">体 (3)</span></div></td><td class="ckc"><svg width="13" height="12"><use href="#ck"/></svg></td><td></td><td></td></tr>
            <tr><td><div class="cell lv1b"><svg width="13" height="13"><use href="#cb"/></svg><svg class="ml1" width="17" height="18"><use href="#bd"/></svg><span class="ml2 off">体 (4)</span></div></td><td class="ckc"><svg width="13" height="12"><use href="#ck"/></svg></td><td></td><td></td></tr>
            <tr class="zeb"><td><div class="cell lv1b"><svg width="13" height="13"><use href="#cb"/></svg><svg class="ml1" width="16" height="16" viewBox="0 0 16 16"><rect x="1" y="1" width="7" height="14" rx="2" fill="#c6d0f0" stroke="#5a6cc0"/><rect x="10" y="7" width="5" height="8" fill="#dde4f8" stroke="#5a6cc0"/><path d="M10 1l4 3" stroke="#e07020" stroke-width="2"/></svg><span class="ml3 off">缩放体 (5)</span></div></td><td class="ckc"><svg width="13" height="12"><use href="#ck"/></svg></td><td></td><td></td></tr>
            <tr><td><div class="cell lv1b"><svg width="13" height="13"><use href="#cb"/></svg><svg class="ml1" width="17" height="18"><use href="#bd"/></svg><span class="ml2 off">体 (6)</span></div></td><td class="ckc"><svg width="13" height="12"><use href="#ck"/></svg></td><td></td><td></td></tr>
          </tbody>
        </table>
        <svg class="treelines" width="120" height="376"><g stroke="#8a8a8a" stroke-dasharray="1 1" fill="none"><path d="M10.500 24V196M29.500 24V131M48.500 48V107M29.500 216V376"/><path d="M34 35.500h5M49 59.500h8M49 83.500h8M49 107.500h8M30 131.500h8M16 155.500h4M16 179.500h4M16 203.500h4M30 227.500h8M30 251.500h8M30 275.500h8M30 299.500h8M30 323.500h8M30 347.500h8M30 371.500h8"/></g></svg>
      </div>
    </section>
    <div class="splitter"></div>

    <div class="gfxcol d-flex flex-column">
      <div class="tabstrip"></div>
      <div class="gfxbody">
        <div class="gfx">
          <svg width="435" height="382" viewBox="688 193 435 382">
            <defs><linearGradient id="gr" x1="0" x2="1" y1="0" y2="0"><stop offset="0" stop-color="#0d7f0d"/><stop offset=".45" stop-color="#03cf03"/><stop offset=".75" stop-color="#00c400"/><stop offset="1" stop-color="#058a05"/></linearGradient></defs>
            <path d="M1083 373h40" stroke="#8a8a8a" stroke-dasharray="7 7" fill="none"/>
            <g stroke="#33619c" fill="none">
              <path d="M1083 443l40 10" stroke-width="2"/>
              <path d="M1083 452l40 11M1083 461l40 11M1083 464l40 12M1083 470l40 13M1083 478l40 12" stroke-width="1.200"/>
              <path d="M1083 481l40 11" stroke-width="1.600"/>
              <path d="M1083 512l22 5 18-2M1083 521l40 1" stroke-width="1.500"/>
              <path d="M1083 546l18-3 22 0" stroke-width="2.200"/>
              <path d="M1103 518c-4 10 4 18 0 26M1100 541h20M1104 535h18M1110 527h13" stroke-width="1"/>
              <circle cx="1111" cy="516" r="5" stroke-width="1"/>
              <circle cx="1109" cy="548" r="5" stroke-width="1"/>
              <path d="M1112 515l11-11M1108 548l15 14M1083 561l20-8 20-4" stroke-width="1"/>
            </g>
            <rect x="788" y="561" width="222" height="14" fill="url(#gr)"/>
            <g stroke="#3d3d4a" fill="none">
              <path d="M788 565l3-4M788 573l30-2 6-10M796 575l3-14M1000 561v14M1005 561v14M1009 561v14M982 561v14M970 561l-25 14M858 563l60 12"/>
            </g>
            <g stroke="#3b5aa0" fill="none"><path d="M895 561l-5 14M920 561l-3 14M945 561l-18 14"/></g>
            <path d="M866 561v14" stroke="#9a9a9a"/>
          </svg>
        </div>
      </div>
    </div>
  </div>

  <!-- floating dialog -->
  <div class="dlg d-flex flex-column">
    <div class="dlghead d-flex align-items-center">
      <svg width="14" height="14" viewBox="0 0 15 15"><circle cx="7.500" cy="7.500" r="4.500" fill="none" stroke="#fff" stroke-width="2.200"/><circle cx="7.500" cy="7.500" r="6.300" fill="none" stroke="#fff" stroke-width="2" stroke-dasharray="2 2.950"/></svg>
      <span class="ml8 flex-grow-1">基本视图设置</span>
      <svg width="14" height="14" viewBox="0 0 14 14"><path d="M4 3a5 5 0 1 0 5 0" fill="none" stroke="#fff" stroke-width="2"/><path d="M2 1h5v5z" fill="#fff"/></svg>
      <svg class="ml9" width="12" height="12" viewBox="0 0 12 12"><path d="M1 1l10 10M11 1 1 11" stroke="#fff" stroke-width="2"/></svg>
    </div>
    <div class="dlgfind d-flex align-items-center">
      <svg width="23" height="20" viewBox="0 0 23 20"><ellipse cx="6" cy="6" rx="5.500" ry="4.500" fill="#3a3f4a"/><ellipse cx="16" cy="9" rx="6" ry="5" fill="#3a3f4a"/><circle cx="5" cy="5" r="2.200" fill="#5aa0d8"/><circle cx="16" cy="8" r="2.400" fill="#5aa0d8"/><path d="M10 6l3 2v6l4 5-3-1-5-7z" fill="#8a8a8a"/></svg>
      <span class="ml2">查找</span>
      <div class="findin"></div>
    </div>
    <div class="dlgmid d-flex">
      <div class="treep">
        <div class="trow plain">角度</div>
        <div class="trow plain">可见线</div>
        <div class="trow plain">隐藏线</div>
        <div class="trow plain">虚拟交线</div>
        <div class="trow plain">追踪线</div>
        <div class="trow plain">螺纹</div>
        <div class="trow plain">PMI</div>
        <div class="trow plain">着色</div>
        <div class="trow plain">透视</div>
        <div class="trow sel"><b>光顺边</b></div>
        <div class="trow plain">视图标签</div>
        <div class="trow top"><span class="pbox plus"></span><span class="tl">基本/图纸</span></div>
        <div class="trow top"><span class="pbox plus"></span><span class="tl">视图</span></div>
        <svg class="treelines" width="60" height="320"><g stroke="#8a8a8a" stroke-dasharray="1 1" fill="none"><path d="M10.500 1V297M29.500 1V253"/><path d="M30 13.500h7M30 37.500h7M30 61.500h7M30 85.500h7M30 109.500h7M30 133.500h7M30 157.500h7M30 181.500h7M30 205.500h7M30 229.500h7M30 253.500h7M17 277.500h5M17 301.500h5"/></g></svg>
        <div class="sbar"><span class="arrup"></span><div class="thumb"><div class="gripl"></div></div><span class="arrdn"></span></div>
      </div>
      <div class="setp">
        <div class="setwhite">
          <div class="sechead d-flex justify-content-between align-items-center"><span>格式</span><svg class="chev" width="15" height="11" viewBox="0 0 15 11"><path d="M1.500 10 7.500 2l6 8" fill="none" stroke="#0c6480" stroke-width="2.600"/></svg></div>
          <div class="ckrow c-a"><span class="ckbox"><svg width="11" height="14" viewBox="0 0 11 14"><path d="M1 8l2-1 1.500 3L9 1h1.500L5 13H3.500z" fill="#3a5aa8"/></svg></span><span class="focusbox">显示光顺边</span></div>
          <div class="lineopts d-flex align-items-start justify-content-end"><span class="swatch"></span><div class="lsel ls1"><span class="lin1"></span><span class="tri ml12"></span></div><div class="lsel ls2"><span class="lin2"></span><span>0.35 mm</span><span class="tri ml7"></span></div></div>
          <div class="ckrow c-b"><span class="ckbox"><svg width="11" height="14" viewBox="0 0 11 14"><path d="M1 8l2-1 1.500 3L9 1h1.500L5 13H3.500z" fill="#3a5aa8"/></svg></span><span class="plainlbl">显示端点缝隙</span></div>
          <div class="numrow d-flex align-items-center"><span class="rowlabel">端点缝隙大小</span><span class="numin">3.0000</span></div>
          <div class="ckrow c-c"><span class="ckbox"></span><span class="plainlbl">替代角度公差</span></div>
        </div>
      </div>
    </div>
    <div class="secbar d-flex justify-content-between align-items-center"><span>继承</span><svg class="chev" width="15" height="11" viewBox="0 0 15 11"><path d="M1.500 1 7.500 9l6-8" fill="none" stroke="#0c6480" stroke-width="2.600"/></svg></div>
    <div class="dlgbtns d-flex justify-content-end">
      <button type="button" class="btn dbtn dbtn-ok">确定</button>
      <button type="button" class="btn dbtn dbtn-no">取消</button>
    </div>
  </div>

  <!-- watermark -->
  <div class="wmark">
    <svg width="80" height="86" viewBox="0 0 80 86"><path d="M38 2 74 22v43L38 84 2 65V22z" fill="#bfe4fa" fill-opacity=".95"/><path d="M38 2 74 22C60 10 50 6 38 2z" fill="#d6effc"/><path d="M2 52C14 62 34 64 52 54L74 44V65L38 84 2 65z" fill="#7cc8f0"/><path d="M38 18 60 31V57L38 70 16 57V31z" fill="#e8f4fb"/><path d="M38 26 56 36 38 46 20 36z" fill="#bee3f6"/><path d="M20 36 38 46V66L20 56z" fill="#88ccee"/><path d="M56 36 38 46V66L56 56z" fill="#74c0e8"/></svg>
    <div class="wmcn">3D世界网</div>
    <div class="wmen">WWW.3DSJW.COM</div>
  </div>
</div>
<script src="https://cdn.jsdelivr.net/npm/bootstrap@5.3.0/dist/js/bootstrap.bundle.min.js"></script>
</body>
</html>
